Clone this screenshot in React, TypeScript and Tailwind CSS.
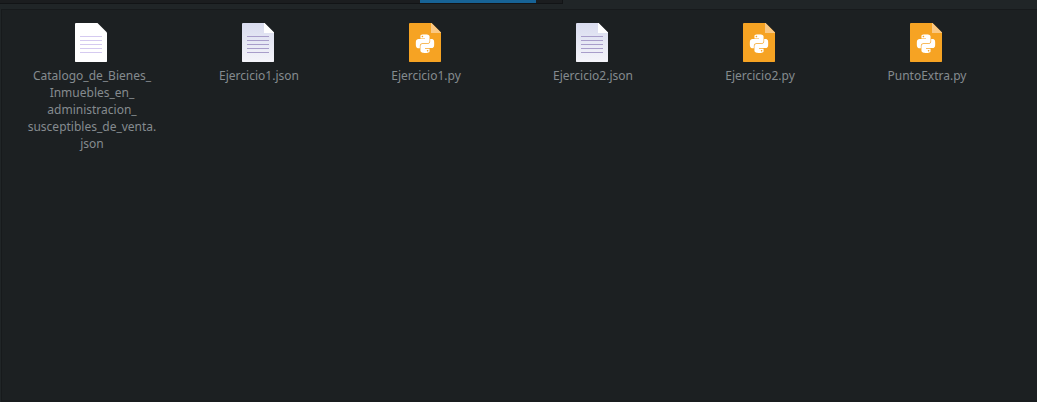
import { SiPython } from "react-icons/si";

type Kind = "plain" | "json" | "python";
type FileItem = { lines: string[]; kind: Kind };

const files: FileItem[] = [
  {
    kind: "plain",
    lines: ["Catalogo_de_Bienes_", "Inmuebles_en_", "administracion_", "susceptibles_de_venta.", "json"],
  },
  { kind: "json", lines: ["Ejercicio1.json"] },
  { kind: "python", lines: ["Ejercicio1.py"] },
  { kind: "json", lines: ["Ejercicio2.json"] },
  { kind: "python", lines: ["Ejercicio2.py"] },
  { kind: "python", lines: ["PuntoExtra.py"] },
];

const fills: Record<Kind, string> = {
  plain: "#ffffff",
  json: "url(#lavender)",
  python: "#f6a323",
};

function FileIcon({ kind }: { kind: Kind }) {
  return (
    <svg width="32" height="39" viewBox="0 0 32 39" className="block">
      <defs>
        <linearGradient id="lavender" x1="0" y1="0" x2="0" y2="1">
          <stop offset="0" stopColor="#d9dcef" />
          <stop offset="1" stopColor="#f4f4fa" />
        </linearGradient>
      </defs>
      <path d="M.5 0H22.5L32 9.5V38.5L31.5 39H.5L0 38.5V.5Z" fill={fills[kind]} />
      {kind === "json" && <path d="M22 0H22.5L32 9.5V10H22Z" fill="#ffffff" />}
      {kind === "python" && <path d="M22 0H22.5L32 9.5V10H22Z" fill="#fac883" />}
      {kind !== "python" && (
        <path
          d="M5 13.5H27M5 17.5H27M5 21.5H27M5 25.5H27M5 29.5H27"
          stroke={kind === "plain" ? "#d5caf0" : "#a89dca"}
          strokeWidth="1"
        />
      )}
      {kind === "python" && <SiPython x="6.6" y="11.2" size={18.8} color="#ffffff" />}
    </svg>
  );
}

export default function App() {
  return (
    <div className="flex h-[402px] w-[1037px] flex-col overflow-hidden bg-[#202527] font-['Noto_Sans',sans-serif]">
      <div className="h-[9px] shrink-0">
        <div className="flex h-1 w-[563px] border-r border-b border-[#121416] bg-[#1b1d1f]">
          <div className="ml-[420px] h-[3px] w-[116px] bg-[#176396]" />
        </div>
      </div>
      <div className="flex min-h-0 flex-1 pl-px">
        <main className="flex flex-1 items-start border-t border-b-2 border-l border-t-[#171a1c] border-b-[#191c1e] border-l-[#171a1c] bg-[#1c2022] pt-[13px] pl-[5px]">
          {files.map((file) => (
            <div key={file.lines.join("")} className="flex w-[167px] shrink-0 flex-col items-center">
              <FileIcon kind={file.kind} />
              <p className="mt-[5px] ml-[3px] text-center text-[12px] leading-[17px] whitespace-nowrap text-[#858b8f]">
                {file.lines.map((line) => (
                  <span key={line} className="block">
                    {line}
                  </span>
                ))}
              </p>
            </div>
          ))}
        </main>
      </div>
    </div>
  );
}
